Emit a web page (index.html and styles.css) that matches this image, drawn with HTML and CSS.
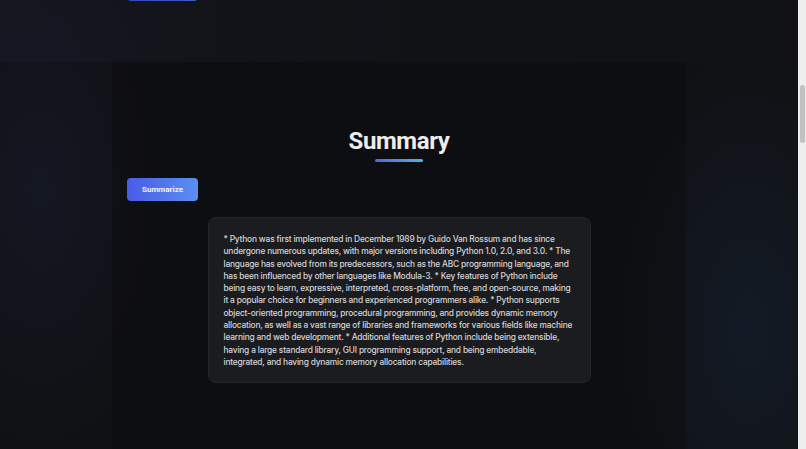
FILE: index.html
```html
<!DOCTYPE html>
<html lang="en">
<head>
<meta charset="utf-8">
<title>Summary</title>
<link rel="stylesheet" href="styles.css">
</head>
<body>
<div class="page">
  <section class="prev-section">
    <div class="btn btn-prev" aria-hidden="true"></div>
  </section>
  <section class="summary-section">
    <div class="wrap">
      <h2 class="title">Summary</h2>
      <div class="title-line"></div>
      <button class="btn" type="button">Summarize</button>
      <div class="card">
        <p class="card-text">* Python was first implemented in December 1989 by Guido Van Rossum and has since undergone numerous updates, with major versions including Python 1.0, 2.0, and 3.0. * The language has evolved from its predecessors, such as the ABC programming language, and has been influenced by other languages like Modula-3. * Key features of Python include being easy to learn, expressive, interpreted, cross-platform, free, and open-source, making it a popular choice for beginners and experienced programmers alike. * Python supports object-oriented programming, procedural programming, and provides dynamic memory allocation, as well as a vast range of libraries and frameworks for various fields like machine learning and web development. * Additional features of Python include being extensible, having a large standard library, GUI programming support, and being embeddable, integrated, and having dynamic memory allocation capabilities.</p>
      </div>
    </div>
  </section>
</div>
<div class="scrollbar"><div class="scroll-thumb"></div></div>
</body>
</html>
```
FILE: styles.css
```css
* { box-sizing: border-box; }
html, body { margin: 0; padding: 0; }
body {
  display: flex;
  width: 806px;
  height: 449px;
  overflow: hidden;
  background-color: #101114;
  background-image:
    radial-gradient(ellipse 140px 260px at 40px 190px, rgba(40, 56, 110, 0.16), rgba(40, 56, 110, 0) 100%),
    radial-gradient(ellipse 150px 280px at 750px 330px, rgba(30, 60, 100, 0.22), rgba(30, 60, 100, 0) 100%);
  font-family: "Inter", "Open Sans", sans-serif;
}
.page {
  flex: 1;
  display: flex;
  flex-direction: column;
  min-width: 0;
}
.prev-section {
  height: 62px;
  padding-left: 127px;
  background: linear-gradient(90deg, rgba(26, 30, 48, 0.35), rgba(20, 21, 26, 0.4) 50%, rgba(20, 20, 24, 0.3));
}
.btn {
  display: block;
  width: 71px;
  height: 23px;
  border: 0;
  border-radius: 4px;
  background: linear-gradient(90deg, #4a5be6, #5a8ff0);
  color: #f4f6ff;
  font-family: "Roboto", "Liberation Sans", sans-serif;
  font-weight: 700;
  font-size: 8px;
  padding: 0;
  cursor: pointer;
}
.btn-prev {
  margin-top: -22px;
  background: linear-gradient(90deg, #3a48b8, #3f5cc8);
}
.summary-section {
  flex: 1;
}
.wrap {
  width: 574px;
  height: 100%;
  margin: 0 auto;
  padding: 65px 15px 0;
  background: rgba(10, 11, 14, 0.45);
  display: flex;
  flex-direction: column;
  align-items: flex-start;
}
.title {
  align-self: center;
  margin: 0;
  font-family: "Roboto", "Liberation Sans", sans-serif;
  font-weight: 700;
  font-size: 24px;
  line-height: 28px;
  letter-spacing: -0.4px;
  color: #ededee;
}
.title-line {
  align-self: center;
  width: 48px;
  height: 3px;
  margin-top: 4px;
  border-radius: 2px;
  background: linear-gradient(90deg, #5a5fe0, #4fb6d9);
}
.btn + .card { margin-top: 16px; }
.title-line + .btn { margin-top: 16px; }
.card {
  align-self: center;
  width: 383px;
  height: 166px;
  padding: 15px 15px 0;
  background: #1b1c1f;
  border: 1px solid #242529;
  border-radius: 8px;
}
.card-text {
  margin: 0;
  font-size: 8.4px;
  font-weight: 500;
  letter-spacing: -0.2px;
  line-height: 12.3px;
  color: #d4d5d8;
}
.scrollbar {
  width: 8px;
  flex: none;
  background: #eeeeee;
  padding: 85px 1px 0 2px;
}
.scroll-thumb {
  height: 58px;
  border-radius: 3px;
  background: #c1c1c1;
}
```
